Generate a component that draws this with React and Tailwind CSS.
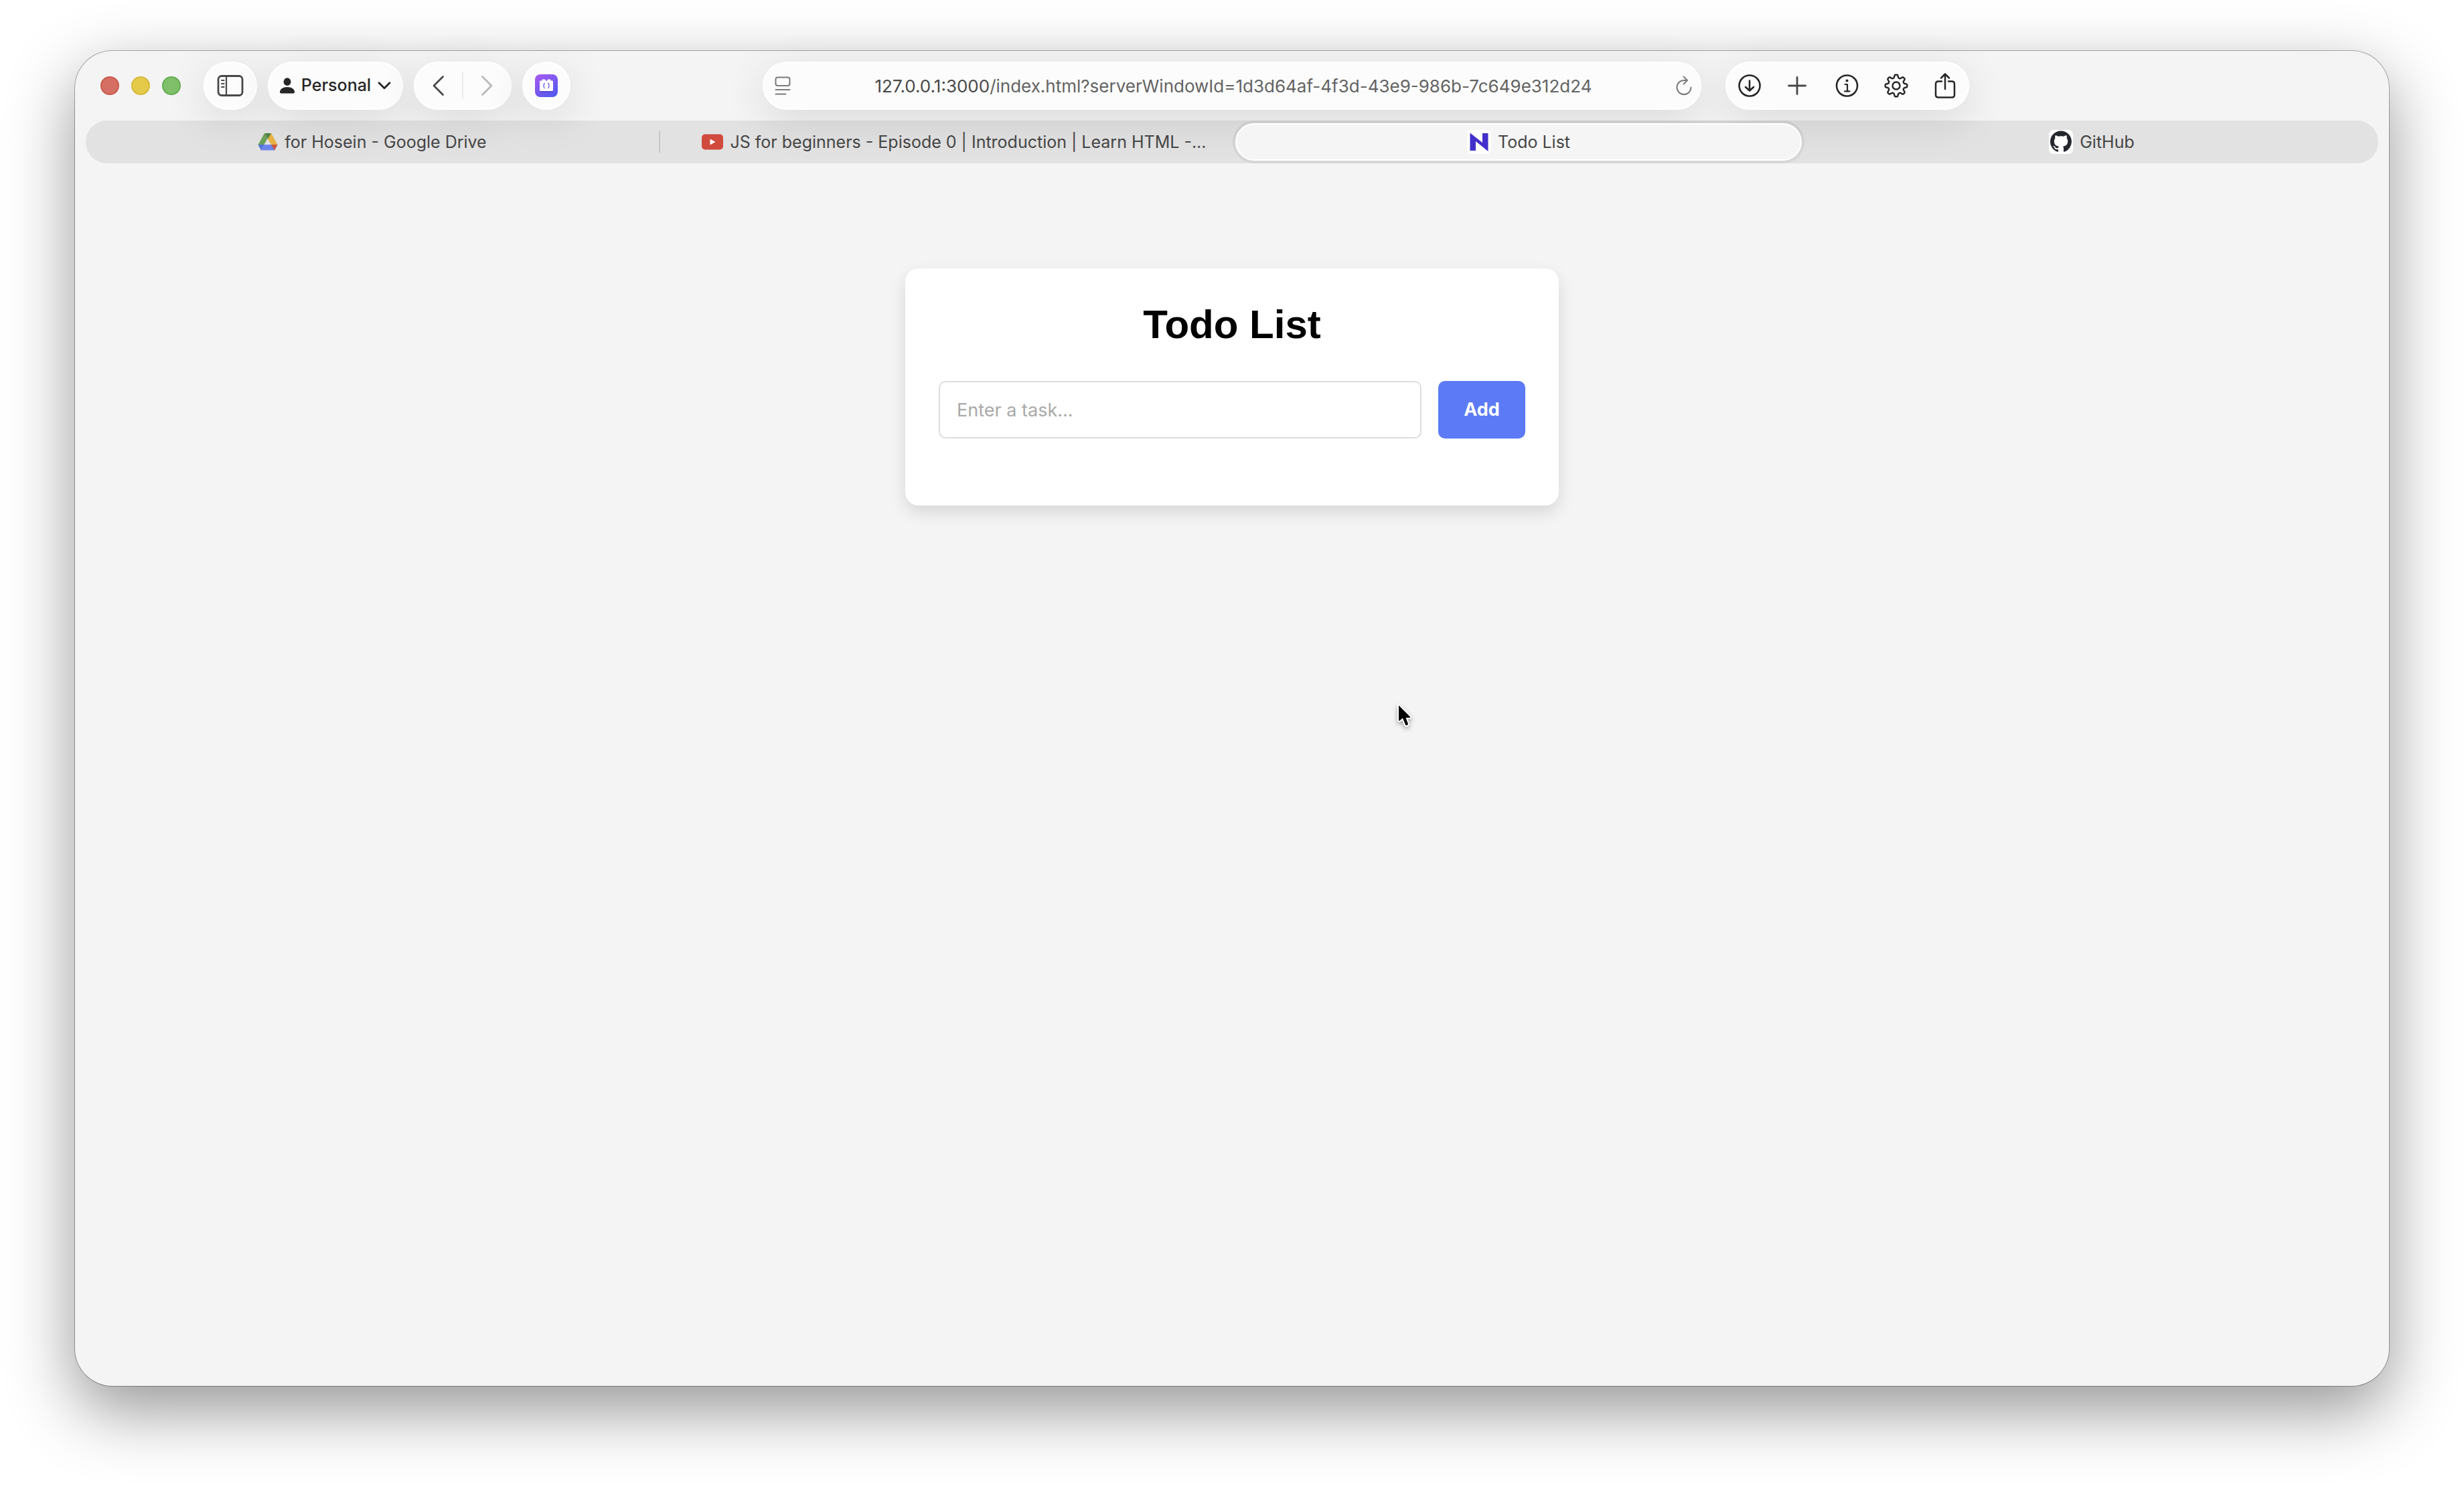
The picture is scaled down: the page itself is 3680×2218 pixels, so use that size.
import React from "react";

const pill = "flex h-[72px] shrink-0 items-center rounded-full border-2 border-white bg-[#fcfcfc] shadow-[0_16px_64px_rgba(0,0,0,0.11)]";

function SidebarIcon() {
  return (
    <svg className="h-8 w-10" viewBox="0 0 40 32" fill="none" stroke="#484848" strokeWidth="2.8" strokeLinecap="round">
      <rect x="2" y="1.5" width="36" height="29" rx="5" />
      <path d="M14 2v28" strokeWidth="2.2" />
      <path d="M7 8h3.600M7 13h3.600M7 18h3.600" strokeWidth="2" />
    </svg>
  );
}

function PersonIcon() {
  return (
    <svg className="h-6 w-[22px]" viewBox="0 0 22 24" fill="#262626">
      <ellipse cx="11" cy="6.2" rx="5.4" ry="5.9" />
      <path d="M2 23.5C.8 23.500 0 22.700 0 21.500 0 17.500 4.500 14 11 14s11 3.500 11 7.500c0 1.200-.8 2-2 2z" />
    </svg>
  );
}

function ChevronDown() {
  return (
    <svg className="h-3 w-5" viewBox="0 0 20 12" fill="none" stroke="#262626" strokeWidth="2.8" strokeLinecap="round" strokeLinejoin="round">
      <path d="M2 1.800l8 8 8-8" />
    </svg>
  );
}

function ExtensionIcon() {
  return (
    <svg className="h-9 w-9" viewBox="0 0 36 36">
      <defs>
        <linearGradient id="ext" x1="0.1" y1="0" x2="0.8" y2="1">
          <stop offset="0" stopColor="#a659f0" />
          <stop offset="1" stopColor="#525af0" />
        </linearGradient>
      </defs>
      <rect x="1" y="1" width="34" height="34" rx="8" fill="url(#ext)" />
      <rect x="8" y="12" width="20" height="16" rx="1.500" fill="#3d2fb0" opacity="0.45" />
      <path d="M9 10.500h2.500V9.500q0-1 1-1h3q1 0 1 1v1h3v-1q0-1 1-1h3q1 0 1 1v1H27q1 0 1 1V25q0 1-1 1H9q-1 0-1-1V11.500q0-1 1-1z" fill="#fff" />
      <path d="M15.800 14.500q-1.500 0-1.500 1.500v1q0 1-1 1 1 0 1 1v1q0 1.500 1.500 1.500M20.200 14.500q1.500 0 1.500 1.500v1q0 1 1 1-1 0-1 1v1q0 1.500-1.500 1.500" fill="none" stroke="#6b58ee" strokeWidth="1.300" />
    </svg>
  );
}

function ReaderIcon() {
  return (
    <svg className="h-7 w-6" viewBox="0 0 24 28" fill="none" stroke="#7b7b7b" strokeWidth="2" strokeLinecap="round">
      <rect x="1.500" y="1.500" width="21" height="12.500" rx="3" />
      <path d="M1.500 20h21M1.500 26.500h15" />
    </svg>
  );
}

function ReloadIcon() {
  return (
    <svg className="h-[30px] w-6" viewBox="0 0 24 30" fill="none" stroke="#7b7b7b" strokeWidth="2" strokeLinecap="round" strokeLinejoin="round">
      <path d="M22.500 17.500A10.500 10.500 0 1 1 12 7h4.500" />
      <path d="M11.500 1.500L17 7l-5.500 5.500" />
    </svg>
  );
}

function DownloadIcon() {
  return (
    <svg className="h-9 w-9" viewBox="0 0 36 36" fill="none" stroke="#262626" strokeWidth="2.600" strokeLinecap="round" strokeLinejoin="round">
      <circle cx="18" cy="18" r="15.500" />
      <path d="M18 10.500v15M12 20l6 5.500 6-5.500" />
    </svg>
  );
}

function PlusIcon() {
  return (
    <svg className="h-9 w-9" viewBox="0 0 36 36" fill="none" stroke="#484848" strokeWidth="2.800" strokeLinecap="round">
      <path d="M16 5.500v25M3.500 18h25" />
    </svg>
  );
}

function InfoIcon() {
  return (
    <svg className="h-9 w-9" viewBox="0 0 36 36" fill="none" stroke="#262626" strokeWidth="2.600" strokeLinecap="round" strokeLinejoin="round">
      <circle cx="17.5" cy="18" r="15.500" />
      <circle cx="17.5" cy="10.500" r="2" fill="#262626" stroke="none" />
      <path d="M14.500 16h3.500v10M14 26.300h7.500" strokeWidth="2.200" />
    </svg>
  );
}

function gearPath() {
  const steps = 96;
  let d = "";
  for (let i = 0; i < steps; i += 1) {
    const a = (i / steps) * Math.PI * 2;
    const wave = Math.tanh(2.2 * Math.cos(8 * a)) / Math.tanh(2.2);
    const r = 14.2 + 2.2 * wave;
    d += `${i ? "L" : "M"}${(18 + r * Math.sin(a)).toFixed(2)} ${(18 - r * Math.cos(a)).toFixed(2)}`;
  }
  return `${d}Z`;
}

function GearIcon() {
  return (
    <svg className="h-9 w-9" viewBox="0 0 36 36" fill="none" stroke="#262626" strokeWidth="2.400" strokeLinejoin="round">
      <path d={gearPath()} />
      <circle cx="18" cy="18" r="5.500" />
    </svg>
  );
}

function ShareIcon() {
  return (
    <svg className="h-10 w-9" viewBox="0 0 36 40" fill="none" stroke="#262626" strokeWidth="2.500" strokeLinecap="round" strokeLinejoin="round">
      <path d="M13 13.500H8q-4 0-4 4V33.500q0 4 4 4h20q4 0 4-4V17.500q0-4-4-4H23" />
      <path d="M18 25V2.500M12 8.500l6-6 6 6" />
    </svg>
  );
}

function DriveIcon() {
  return (
    <svg className="h-7 w-[30px]" viewBox="0 0 30 28">
      <path d="M10 1L0.500 18 5 26l9.500-17z" fill="#6ba05c" />
      <path d="M10 1h10l9.500 17h-9.500z" fill="#e5b243" />
      <path d="M10 1h10l-5 8.500z" fill="#4f8246" />
      <path d="M5 26.500L10 18h19.500L25 26.500z" fill="#6c86ee" />
      <path d="M0.500 18h9.500L5 26.500z" fill="#5674d8" />
      <path d="M20 18h9.500L25 26.500z" fill="#cb583c" />
    </svg>
  );
}

function YoutubeIcon() {
  return (
    <svg className="h-6 w-8" viewBox="0 0 32 24">
      <rect width="32" height="23" y="0.500" rx="5" fill="#d04a3d" />
      <path d="M12.500 7.500v9l8-4.500z" fill="#fff" />
    </svg>
  );
}

function NIcon() {
  return (
    <svg className="h-9 w-9" viewBox="0 0 36 36">
      <rect width="36" height="36" rx="6" fill="#fff" />
      <path d="M4.500 4.500L23 19V5h8.500v27L13 17v14H4.500z" fill="#432fcb" />
    </svg>
  );
}

function GithubIcon() {
  return (
    <svg className="h-9 w-9" viewBox="0 0 36 36">
      <rect width="36" height="36" rx="7" fill="#fff" />
      <path
        transform="translate(2 1.600) scale(2)"
        fill="#24272d"
        d="M8 0C3.580 0 0 3.580 0 8c0 3.540 2.290 6.530 5.470 7.590.4.070.55-.17.55-.38 0-.19-.01-.82-.01-1.490-2.010.37-2.530-.49-2.690-.94-.09-.23-.48-.94-.82-1.130-.28-.15-.68-.52-.01-.53.63-.01 1.080.58 1.230.82.72 1.210 1.870.87 2.330.66.07-.52.28-.87.51-1.070-1.780-.2-3.640-.89-3.640-3.950 0-.87.31-1.590.82-2.150-.08-.2-.36-1.020.08-2.120 0 0 .67-.21 2.200.82.64-.18 1.320-.27 2-.27s1.360.09 2 .27c1.530-1.040 2.200-.82 2.200-.82.44 1.100.16 1.920.08 2.120.51.56.82 1.270.82 2.150 0 3.070-1.870 3.750-3.650 3.950.29.25.54.73.54 1.480 0 1.070-.01 1.930-.01 2.200 0 .21.15.46.55.38A8.010 8.010 0 0 0 16 8c0-4.420-3.580-8-8-8z"
      />
    </svg>
  );
}

function Chevron({ d, color, label, disabled }) {
  return (
    <button type="button" aria-label={label} disabled={disabled} className="flex h-full flex-1 items-center justify-center">
      <svg className="h-8 w-5" viewBox="0 0 20 32" fill="none" stroke={color} strokeWidth="2.800" strokeLinecap="round" strokeLinejoin="round">
        <path d={d} />
      </svg>
    </button>
  );
}

function Tab({ icon, title, active }) {
  return (
    <button
      type="button"
      role="tab"
      aria-selected={active}
      className={
        active
          ? "flex h-14 w-full min-w-0 items-center justify-center gap-2.5 rounded-full border-2 border-white bg-[#f5f5f5] px-4 shadow-[0_0_0_4px_rgba(0,0,0,0.05)]"
          : "flex h-14 w-full min-w-0 items-center justify-center gap-2.5 px-4"
      }
    >
      <span className="shrink-0">{icon}</span>
      <span className="whitespace-nowrap">{title}</span>
    </button>
  );
}

const tools = [
  { label: "Downloads", icon: <DownloadIcon /> },
  { label: "New tab", icon: <PlusIcon /> },
  { label: "Page info", icon: <InfoIcon /> },
  { label: "Settings", icon: <GearIcon /> },
  { label: "Share", icon: <ShareIcon /> },
];

function Toolbar() {
  return (
    <header className="grid grid-cols-[1fr_1402px_1fr] items-center pt-4">
      <div className="flex items-center">
        <div className="flex gap-[18px] pl-[38px]">
          <button type="button" aria-label="Close" className="size-7 rounded-full border-2 border-[#c9594c] bg-[#d66f63]" />
          <button type="button" aria-label="Minimize" className="size-7 rounded-full border-2 border-[#d6b93a] bg-[#e5ca49]" />
          <button type="button" aria-label="Zoom" className="size-7 rounded-full border-2 border-[#63ad50] bg-[#80c06b]" />
        </div>
        <div className="flex gap-4 pl-[34px]">
          <button type="button" aria-label="Sidebar" className={`${pill} w-20 justify-center`}>
            <SidebarIcon />
          </button>
          <button type="button" className={`${pill} w-[202px] justify-center gap-2.5 text-[25px] font-medium text-[#262626]`}>
            <PersonIcon />
            Personal
            <ChevronDown />
          </button>
          <div className={`${pill} w-[146px]`}>
            <Chevron label="Back" color="#484848" d="M16.500 2.500L3 16l13.500 13.500" />
            <span className="h-10 w-0.5 bg-[#ebebeb]" />
            <Chevron label="Forward" color="#b9b9b9" disabled d="M3.500 2.500L17 16 3.500 29.500" />
          </div>
          <button type="button" aria-label="Extension" className={`${pill} w-[72px] justify-center`}>
            <ExtensionIcon />
          </button>
        </div>
      </div>
      <div className={`${pill} justify-between pr-3 pl-4`}>
        <button type="button" aria-label="Reader">
          <ReaderIcon />
        </button>
        <a href="#address" className="text-[26px] text-[#636363]">
          <span className="text-[#484848]">127.0.0.1:3000</span>/index.html?serverWindowId=1d3d64af-4f3d-43e9-986b-7c649e312d24
        </a>
        <button type="button" aria-label="Reload">
          <ReloadIcon />
        </button>
      </div>
      <div className="flex pl-9">
        <div className={`${pill} gap-[37px] px-4`}>
          {tools.map((tool) => (
            <button key={tool.label} type="button" aria-label={tool.label}>
              {tool.icon}
            </button>
          ))}
        </div>
      </div>
    </header>
  );
}

function Tabs() {
  return (
    <nav role="tablist" className="mx-4 mt-4 grid h-16 grid-cols-4 items-center rounded-full bg-black/7 text-[25px] leading-[38px] text-[#454545]">
      <div className="flex items-center">
        <Tab icon={<DriveIcon />} title="for Hosein - Google Drive" active={false} />
      </div>
      <div className="flex items-center">
        <span className="mr-6 h-8 w-0.5 shrink-0 bg-[#c6c6c6]" />
        <Tab icon={<YoutubeIcon />} title="JS for beginners - Episode 0 | Introduction | Learn HTML -..." active={false} />
      </div>
      <div className="flex items-center px-[5px]">
        <Tab icon={<NIcon />} title="Todo List" active />
      </div>
      <div className="flex items-center">
        <Tab icon={<GithubIcon />} title="GitHub" active={false} />
      </div>
    </nav>
  );
}

function TodoCard() {
  return (
    <main className="mx-auto mt-[157px] w-[976px] rounded-[20px] bg-white px-[50px] pt-[50px] pb-[100px] shadow-[0_10px_25px_rgba(0,0,0,0.12)]">
      <h1 className="text-center font-['Liberation_Sans',Arial,sans-serif] text-[60px] leading-[68px] font-bold text-black">Todo List</h1>
      <form className="mt-[50px] flex gap-[25px]" onSubmit={(event) => event.preventDefault()}>
        <input
          type="text"
          aria-label="Task"
          placeholder="Enter a task..."
          className="h-[86px] min-w-0 flex-1 rounded-[10px] border-2 border-[#dddddd] bg-white px-[25px] text-[27px] placeholder:text-[#a9a9a9]"
        />
        <button type="submit" className="h-[86px] w-[130px] rounded-[10px] bg-[#5c7af5] text-[27px] font-bold text-white">
          Add
        </button>
      </form>
    </main>
  );
}

function Cursor() {
  return (
    <svg className="absolute top-[974px] left-[1972px] h-10 w-7 drop-shadow-[0_3px_3px_rgba(0,0,0,0.35)]" viewBox="0 0 28 40">
      <path
        d="M5 3.500v22.500q.5 1 1.500.3L11 22.500l4 10q1.500 2 3.500 0 .7-.8.300-2L15.500 22h6q1.300-.5.500-1.500z"
        fill="#000"
        stroke="#fff"
        strokeWidth="4"
        strokeLinejoin="round"
        paintOrder="stroke"
      />
    </svg>
  );
}

export default function App() {
  return (
    <div className="flex min-h-screen flex-col bg-white px-28 pt-[76px] pb-[148px] font-[Inter,sans-serif]">
      <div className="relative flex-1 rounded-[56px] bg-[#f4f4f4] shadow-[0_0_0_1px_rgba(0,0,0,0.3),0_36px_100px_rgba(0,0,0,0.42)]">
        <Toolbar />
        <Tabs />
        <TodoCard />
        <Cursor />
      </div>
    </div>
  );
}
